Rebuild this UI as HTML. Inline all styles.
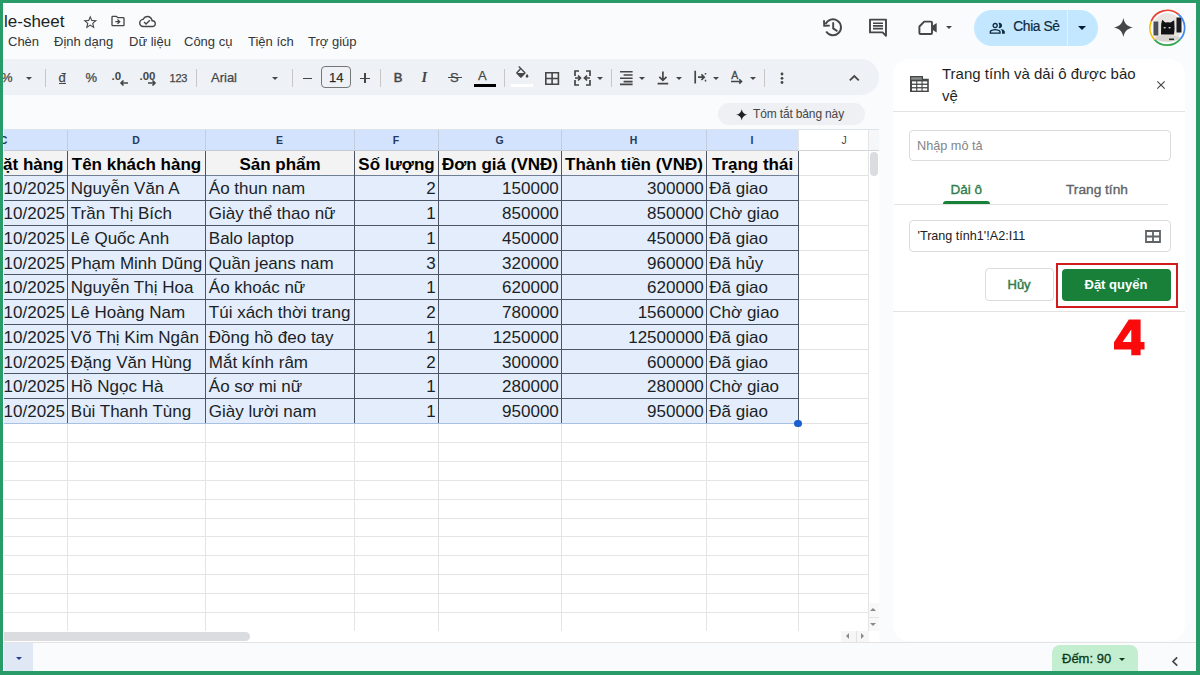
<!DOCTYPE html>
<html><head><meta charset="utf-8">
<style>
*{margin:0;padding:0;box-sizing:border-box}
html,body{width:1200px;height:675px;overflow:hidden;background:#f9fbfd;font-family:"Liberation Sans",sans-serif;color:#1f1f1f}
body{position:relative}
.a{position:absolute;white-space:nowrap}
svg.a{display:block}
</style></head><body>
<div class="a" style="left:4px;top:11.72px;font-size:17px;line-height:1.15;color:#1f1f1f;font-weight:normal;">le-sheet</div>
<svg class="a" style="left:81.6px;top:13.6px;" width="16.5" height="16.5" viewBox="0 0 24 24" fill="#444746"><path d="M22 9.24l-7.19-.62L12 2 9.19 8.63 2 9.24l5.46 4.73L5.82 21 12 17.27 18.18 21l-1.63-7.03L22 9.24zM12 15.4l-3.76 2.27 1-4.28-3.32-2.88 4.38-.38L12 6.1l1.71 4.04 4.38.38-3.32 2.88 1 4.28L12 15.4z"/></svg>
<svg class="a" style="left:110px;top:13px;" width="16" height="16" viewBox="0 0 24 24" fill="#444746"><path d="M20 6h-8l-2-2H4c-1.1 0-1.99.9-1.99 2L2 18c0 1.1.9 2 2 2h16c1.1 0 2-.9 2-2V8c0-1.1-.9-2-2-2zm0 12H4V6h5.17l2 2H20v10zm-7.84-6H8v2h4.16l-1.59 1.59L11.99 17 16 13.01 11.99 9l-1.41 1.41L12.16 12z"/></svg>
<svg class="a" style="left:139px;top:13px;" width="17" height="17" viewBox="0 0 24 24" fill="#444746"><path d="M19.35 10.04C18.67 6.59 15.64 4 12 4 9.11 4 6.6 5.64 5.35 8.04 2.34 8.36 0 10.91 0 14c0 3.31 2.69 6 6 6h13c2.76 0 5-2.24 5-5 0-2.64-2.05-4.78-4.65-4.96zM19 18H6c-2.21 0-4-1.79-4-4 0-2.05 1.53-3.76 3.56-3.97l1.07-.11.5-.95C8.08 7.14 9.94 6 12 6c2.62 0 4.88 1.86 5.39 4.43l.3 1.5 1.53.11c1.56.1 2.78 1.41 2.78 2.96 0 1.65-1.35 3-3 3zm-9-3.82l-2.09-2.09L6.5 13.5 10 17l6.01-6.01-1.41-1.41z"/></svg>
<div class="a" style="left:8px;top:34.73px;font-size:13px;line-height:1.15;color:#363636;font-weight:normal;">Chèn</div>
<div class="a" style="left:54px;top:34.73px;font-size:13px;line-height:1.15;color:#363636;font-weight:normal;">Định dạng</div>
<div class="a" style="left:129px;top:34.73px;font-size:13px;line-height:1.15;color:#363636;font-weight:normal;">Dữ liệu</div>
<div class="a" style="left:184px;top:34.73px;font-size:13px;line-height:1.15;color:#363636;font-weight:normal;">Công cụ</div>
<div class="a" style="left:248px;top:34.73px;font-size:13px;line-height:1.15;color:#363636;font-weight:normal;">Tiện ích</div>
<div class="a" style="left:308px;top:34.73px;font-size:13px;line-height:1.15;color:#363636;font-weight:normal;">Trợ giúp</div>
<svg class="a" style="left:815px;top:12px" width="35" height="30" viewBox="815 12 35 30"><path d="M825.6 24.2 A8 8 0 1 1 826.2 31.5" fill="none" stroke="#444746" stroke-width="1.9"/><path d="M824 20.2 L824.2 25.8 L829.8 25.6" fill="none" stroke="#444746" stroke-width="1.9"/><path d="M833.2 22.2 V28.4 L837.4 31.2" fill="none" stroke="#444746" stroke-width="1.9"/></svg>
<svg class="a" style="left:860px;top:12px" width="35" height="30" viewBox="860 12 35 30"><path d="M870 19.6 H886 V35.8 L882.6 32.4 H870 Z" fill="none" stroke="#444746" stroke-width="1.9" stroke-linejoin="round"/><path d="M873 23.2 H883 M873 25.9 H883 M873 28.6 H883" stroke="#444746" stroke-width="1.6"/></svg>
<svg class="a" style="left:910px;top:14px" width="35" height="28" viewBox="910 14 35 28"><path d="M924.2 21.6 H931 Q932 21.6 932 22.6 V33 Q932 34 931 34 H920.4 Q919.4 34 919.4 33 V26.5 Z" fill="none" stroke="#444746" stroke-width="1.9" stroke-linejoin="round"/><path d="M932 26 L936.7 23 V32.5 L932 29.5 Z" fill="#444746"/></svg>
<div class="a" style="left:945.9000000000001px;top:25.650000000000002px;width:0;height:0;border-left:3.3px solid transparent;border-right:3.3px solid transparent;border-top:3.3px solid #444746"></div>
<div class="a" style="left:974px;top:10px;width:124px;height:36px;border-radius:18px;background:#c2e7ff"></div>
<div class="a" style="left:1066.5px;top:10px;width:1px;height:36px;background:#e3f2fb;"></div>
<svg class="a" style="left:989.3px;top:19.8px;" width="16.5" height="16.5" viewBox="0 0 24 24" fill="#0f2a3f"><path d="M16.67 13.13C18.04 14.06 19 15.32 19 17v3h4v-3c0-2.18-3.57-3.47-6.33-3.87zM15 12c2.21 0 4-1.79 4-4s-1.79-4-4-4c-.47 0-.91.1-1.33.24C14.5 5.27 15 6.58 15 8s-.5 2.73-1.33 3.76c.42.14.86.24 1.33.24zm-6 0c2.21 0 4-1.79 4-4s-1.79-4-4-4-4 1.79-4 4 1.79 4 4 4zm0-6c1.1 0 2 .9 2 2s-.9 2-2 2-2-.9-2-2 .9-2 2-2zm0 7c-2.67 0-8 1.34-8 4v3h16v-3c0-2.66-5.33-4-8-4zm6 5H3v-.99C3.2 16.29 6.3 15 9 15s5.8 1.29 6 2v1z"/></svg>
<div class="a" style="left:1013.3px;top:18.91px;font-size:13.8px;line-height:1.15;color:#0f2a3f;font-weight:normal;-webkit-text-stroke:0.2px #0f2a3f;letter-spacing:-0.4px">Chia Sẻ</div>
<div class="a" style="left:1077.5px;top:25.75px;width:0;height:0;border-left:4.5px solid transparent;border-right:4.5px solid transparent;border-top:4.5px solid #001d35"></div>
<svg class="a" style="left:1112.2px;top:16.4px;" width="22.8" height="22.8" viewBox="0 0 24 24" fill="#444746"><path d="M12 2C13.2 8 16 10.8 22 12 16 13.2 13.2 16 12 22 10.8 16 8 13.2 2 12 8 10.8 10.8 8 12 2z"/></svg>
<svg class="a" style="left:1145px;top:5px" width="45" height="45" viewBox="1145 5 45 45">
<circle cx="1167.3" cy="27.6" r="14.3" fill="#e9e6e2"/>
<rect x="1153.5" y="21.5" width="4.8" height="14" fill="#4a4f58"/>
<rect x="1176.5" y="17.5" width="5" height="15" fill="#1d1d1f"/>
<path d="M1161 34.5 L1161.2 24 L1162.2 19.8 L1165.2 22.6 Q1167.8 22 1170.5 22.6 L1174.2 20.2 L1174.4 25 Q1175 29 1174 34.5 Z" fill="#121214"/>
<ellipse cx="1164.7" cy="27.8" rx="1.2" ry="0.8" fill="#d9dccf"/><ellipse cx="1169.6" cy="27.8" rx="1.2" ry="0.8" fill="#d9dccf"/>
<path d="M1155 37 Q1167 33 1180 37 L1178 40 Q1167 43 1156 40 Z" fill="#d8d4d0"/>
<rect x="1169" y="38.5" width="5" height="1.6" fill="#2a2a2a"/>
<path d="M1151.2 21.3 A17.3 17.3 0 0 1 1178.6 14.5" fill="none" stroke="#ea4335" stroke-width="1.7"/>
<path d="M1178.6 14.5 A17.3 17.3 0 0 1 1180.3 39.1" fill="none" stroke="#4285f4" stroke-width="1.7"/>
<path d="M1180.3 39.1 A17.3 17.3 0 0 1 1154.4 39.6" fill="none" stroke="#34a853" stroke-width="1.7"/>
<path d="M1154.4 39.6 A17.3 17.3 0 0 1 1151.2 21.3" fill="none" stroke="#fbbc04" stroke-width="1.7"/>
</svg>
<div class="a" style="left:0;top:59px;width:879px;height:36px;background:#eef1f6;border-radius:0 18px 18px 0"></div>
<div class="a" style="left:1px;top:71.23px;font-size:13px;line-height:1.15;color:#444746;font-weight:normal;-webkit-text-stroke:0.25px #444746;">%</div>
<div class="a" style="left:25.5px;top:76.75px;width:0;height:0;border-left:3.5px solid transparent;border-right:3.5px solid transparent;border-top:3.5px solid #444746"></div>
<div class="a" style="left:45px;top:69px;width:1px;height:17.5px;background:#c7c7c7;"></div>
<div class="a" style="left:58.5px;top:70.73px;font-size:13px;line-height:1.15;color:#444746;font-weight:normal;-webkit-text-stroke:0.25px #444746;">đ</div>
<div class="a" style="left:58.5px;top:83px;width:7px;height:1.3px;background:#444746;"></div>
<div class="a" style="left:85.5px;top:70.73px;font-size:13px;line-height:1.15;color:#444746;font-weight:normal;-webkit-text-stroke:0.25px #444746;">%</div>
<div class="a" style="left:111.5px;top:69.89px;font-size:11.5px;line-height:1.15;color:#444746;font-weight:bold;">.0</div>
<svg class="a" style="left:119px;top:79.5px;" width="10" height="6" viewBox="0 0 10 6" fill="#444746"><path d="M9 3H2M4.5 0.5L2 3l2.5 2.5" stroke="#444746" stroke-width="1.6" fill="none"/></svg>
<div class="a" style="left:139.5px;top:69.89px;font-size:11.5px;line-height:1.15;color:#444746;font-weight:bold;">.00</div>
<svg class="a" style="left:147px;top:79.5px;" width="10" height="6" viewBox="0 0 10 6" fill="#444746"><path d="M1 3h7M5.5 0.5L8 3 5.5 5.5" stroke="#444746" stroke-width="1.6" fill="none"/></svg>
<div class="a" style="left:169.5px;top:71.55px;font-size:11px;line-height:1.15;color:#444746;font-weight:normal;-webkit-text-stroke:0.25px #444746;letter-spacing:-0.2px">123</div>
<div class="a" style="left:196px;top:69px;width:1px;height:17.5px;background:#c7c7c7;"></div>
<div class="a" style="left:211px;top:70.73px;font-size:13px;line-height:1.15;color:#444746;font-weight:normal;-webkit-text-stroke:0.25px #444746;">Arial</div>
<div class="a" style="left:271.5px;top:76.75px;width:0;height:0;border-left:3.5px solid transparent;border-right:3.5px solid transparent;border-top:3.5px solid #444746"></div>
<div class="a" style="left:292px;top:69px;width:1px;height:17.5px;background:#c7c7c7;"></div>
<div class="a" style="left:302.5px;top:77.5px;width:9.5px;height:1.6px;background:#444746;"></div>
<div class="a" style="left:321px;top:66px;width:30px;height:22px;border:1px solid #747775;border-radius:4px"></div>
<div class="a" style="left:329px;top:70.73px;font-size:13px;line-height:1.15;color:#1f1f1f;font-weight:normal;-webkit-text-stroke:0.25px #444746;">14</div>
<div class="a" style="left:360px;top:77.5px;width:9.5px;height:1.6px;background:#444746;"></div>
<div class="a" style="left:364px;top:73px;width:1.6px;height:10px;background:#444746;"></div>
<div class="a" style="left:380px;top:69px;width:1px;height:17.5px;background:#c7c7c7;"></div>
<div class="a" style="left:393.8px;top:70.53px;font-size:13px;line-height:1.15;color:#444746;font-weight:normal;-webkit-text-stroke:0.55px #444746">B</div>
<div class="a" style="left:421.5px;top:69.18px;font-size:14.5px;line-height:1.15;color:#444746;font-weight:bold;font-family:'Liberation Serif',serif"><i>I</i></div>
<div class="a" style="left:450px;top:70.53px;font-size:13px;line-height:1.15;color:#444746;font-weight:normal;-webkit-text-stroke:0.25px #444746;">S</div>
<div class="a" style="left:448px;top:76.6px;width:14px;height:1.5px;background:#444746;"></div>
<div class="a" style="left:478px;top:68.73px;font-size:13px;line-height:1.15;color:#444746;font-weight:normal;-webkit-text-stroke:0.25px #444746;">A</div>
<div class="a" style="left:474px;top:84px;width:22px;height:3px;background:#000;"></div>
<div class="a" style="left:504px;top:69px;width:1px;height:17.5px;background:#c7c7c7;"></div>
<svg class="a" style="left:513.5px;top:66px;" width="16.5" height="16.5" viewBox="0 0 24 24" fill="#444746"><path d="M16.56 8.94L7.62 0 6.21 1.41l2.38 2.38-5.15 5.15c-.59.59-.59 1.54 0 2.12l5.5 5.5c.29.29.68.44 1.06.44s.77-.15 1.06-.44l5.5-5.5c.59-.58.59-1.53 0-2.12zM5.21 10L10 5.21 14.79 10H5.21zM19 11.5s-2 2.17-2 3.5c0 1.1.9 2 2 2s2-.9 2-2c0-1.33-2-3.5-2-3.5z"/></svg>
<div class="a" style="left:511px;top:84px;width:22px;height:3px;background:#ffffff;"></div>
<svg class="a" style="left:540px;top:68px" width="25" height="22" viewBox="540 68 25 22"><path d="M545.8 72.8 H558.4 V84.2 H545.8 Z M552.1 72.8 V84.2 M545.8 78.5 H558.4" stroke="#444746" stroke-width="1.6" fill="none"/></svg>
<svg class="a" style="left:574px;top:70px;" width="17" height="16" viewBox="0 0 17 16" fill="#444746"><path d="M1 6V1h4M12 1h4v5M1 10v5h4M12 15h4v-5M1 8h5M4 5.5L6.5 8 4 10.5M16 8h-5M13 5.5L10.5 8 13 10.5" stroke="#444746" stroke-width="1.7" fill="none"/></svg>
<div class="a" style="left:596.5px;top:76.75px;width:0;height:0;border-left:3.5px solid transparent;border-right:3.5px solid transparent;border-top:3.5px solid #444746"></div>
<div class="a" style="left:611px;top:69px;width:1px;height:17.5px;background:#c7c7c7;"></div>
<svg class="a" style="left:615px;top:66px" width="25" height="24" viewBox="615 66 25 24"><path d="M620 71.7 H632.6 M623.6 75 H632.6 M620 78.3 H632.6 M623.6 81.6 H632.6 M620 84.4 H632.6" stroke="#444746" stroke-width="1.6" fill="none"/></svg>
<div class="a" style="left:639.0px;top:76.75px;width:0;height:0;border-left:3.5px solid transparent;border-right:3.5px solid transparent;border-top:3.5px solid #444746"></div>
<svg class="a" style="left:652px;top:66px" width="23" height="24" viewBox="652 66 23 24"><path d="M662.9 71.5 V80.2 M659.3 76.8 L662.9 80.4 L666.5 76.8 M657.6 83.6 H668.2" stroke="#444746" stroke-width="1.7" fill="none"/></svg>
<div class="a" style="left:676.0px;top:76.75px;width:0;height:0;border-left:3.5px solid transparent;border-right:3.5px solid transparent;border-top:3.5px solid #444746"></div>
<svg class="a" style="left:690px;top:66px" width="22" height="24" viewBox="690 66 22 24"><path d="M695.2 70.8 V83.5 M698 77.2 H704 M701.4 74.4 L704.2 77.2 L701.4 80" stroke="#444746" stroke-width="1.7" fill="none"/><path d="M705.5 73 V74.6 M705.5 79.8 V81.4" stroke="#444746" stroke-width="1.5"/></svg>
<div class="a" style="left:712.5px;top:76.75px;width:0;height:0;border-left:3.5px solid transparent;border-right:3.5px solid transparent;border-top:3.5px solid #444746"></div>
<div class="a" style="left:731.2px;top:69.10px;font-size:10.5px;line-height:1.15;color:#444746;font-weight:normal;-webkit-text-stroke:0.3px #444746">A</div>
<svg class="a" style="left:728px;top:76px" width="18" height="12" viewBox="728 76 18 12"><path d="M731 81.4 H741.5 M739.3 79.2 L741.6 81.4 L739.3 83.6" stroke="#444746" stroke-width="1.5" fill="none"/></svg>
<div class="a" style="left:749.5px;top:76.75px;width:0;height:0;border-left:3.5px solid transparent;border-right:3.5px solid transparent;border-top:3.5px solid #444746"></div>
<div class="a" style="left:764px;top:69px;width:1px;height:17.5px;background:#c7c7c7;"></div>
<svg class="a" style="left:775px;top:68px" width="15" height="22" viewBox="775 68 15 22"><circle cx="782" cy="74" r="1.4" fill="#444746"/><circle cx="782" cy="78.3" r="1.4" fill="#444746"/><circle cx="782" cy="82.5" r="1.4" fill="#444746"/></svg>
<svg class="a" style="left:845px;top:70px" width="20" height="18" viewBox="845 70 20 18"><path d="M849.8 80.4 L854.3 76 L858.8 80.4" fill="none" stroke="#444746" stroke-width="1.8"/></svg>
<div class="a" style="left:718px;top:103px;width:147px;height:22px;border-radius:11px;background:#eef0f4"></div>
<svg class="a" style="left:734.6px;top:107.6px;" width="13.5" height="13.5" viewBox="0 0 24 24" fill="#1f1f1f"><path d="M12 2C12.6 7.4 16.6 11.4 22 12 16.6 12.6 12.6 16.6 12 22 11.4 16.6 7.4 12.6 2 12 7.4 11.4 11.4 7.4 12 2z"/></svg>
<div class="a" style="left:753px;top:107.64px;font-size:12px;line-height:1.15;color:#444746;font-weight:normal;letter-spacing:-0.15px">Tóm tắt bảng này</div>
<div class="a" style="left:4px;top:129px;width:875px;height:513px;background:#ffffff;"></div>
<div class="a" style="left:4px;top:129px;width:794px;height:22px;background:#d3e3fd;"></div>
<div class="a" style="left:-6.5px;top:133.5px;width:20px;text-align:center;font-size:10.5px;line-height:12px;font-weight:bold;color:#263a5e">C</div>
<div class="a" style="left:126.0px;top:133.5px;width:20px;text-align:center;font-size:10.5px;line-height:12px;font-weight:bold;color:#263a5e">D</div>
<div class="a" style="left:269.5px;top:133.5px;width:20px;text-align:center;font-size:10.5px;line-height:12px;font-weight:bold;color:#263a5e">E</div>
<div class="a" style="left:386.0px;top:133.5px;width:20px;text-align:center;font-size:10.5px;line-height:12px;font-weight:bold;color:#263a5e">F</div>
<div class="a" style="left:489.5px;top:133.5px;width:20px;text-align:center;font-size:10.5px;line-height:12px;font-weight:bold;color:#263a5e">G</div>
<div class="a" style="left:623.5px;top:133.5px;width:20px;text-align:center;font-size:10.5px;line-height:12px;font-weight:bold;color:#263a5e">H</div>
<div class="a" style="left:742.0px;top:133.5px;width:20px;text-align:center;font-size:10.5px;line-height:12px;font-weight:bold;color:#263a5e">I</div>
<div class="a" style="left:834.0px;top:133.5px;width:20px;text-align:center;font-size:10.5px;line-height:12px;font-weight:normal;color:#444746">J</div>
<div class="a" style="left:4px;top:151px;width:794px;height:24px;background:#f3f3f3;"></div>
<div class="a" style="left:4px;top:175px;width:794px;height:248px;background:#e4edfb;"></div>
<div class="a" style="left:4px;top:442px;width:864px;height:1px;background:#e5e5e5;"></div>
<div class="a" style="left:4px;top:461px;width:864px;height:1px;background:#e5e5e5;"></div>
<div class="a" style="left:4px;top:480px;width:864px;height:1px;background:#e5e5e5;"></div>
<div class="a" style="left:4px;top:499px;width:864px;height:1px;background:#e5e5e5;"></div>
<div class="a" style="left:4px;top:518px;width:864px;height:1px;background:#e5e5e5;"></div>
<div class="a" style="left:4px;top:536px;width:864px;height:1px;background:#e5e5e5;"></div>
<div class="a" style="left:4px;top:555px;width:864px;height:1px;background:#e5e5e5;"></div>
<div class="a" style="left:4px;top:574px;width:864px;height:1px;background:#e5e5e5;"></div>
<div class="a" style="left:4px;top:593px;width:864px;height:1px;background:#e5e5e5;"></div>
<div class="a" style="left:4px;top:612px;width:864px;height:1px;background:#e5e5e5;"></div>
<div class="a" style="left:67px;top:423px;width:1px;height:208px;background:#e5e5e5;"></div>
<div class="a" style="left:205px;top:423px;width:1px;height:208px;background:#e5e5e5;"></div>
<div class="a" style="left:354px;top:423px;width:1px;height:208px;background:#e5e5e5;"></div>
<div class="a" style="left:438px;top:423px;width:1px;height:208px;background:#e5e5e5;"></div>
<div class="a" style="left:561px;top:423px;width:1px;height:208px;background:#e5e5e5;"></div>
<div class="a" style="left:706px;top:423px;width:1px;height:208px;background:#e5e5e5;"></div>
<div class="a" style="left:798px;top:423px;width:1px;height:208px;background:#e5e5e5;"></div>
<div class="a" style="left:868px;top:423px;width:1px;height:208px;background:#e5e5e5;"></div>
<div class="a" style="left:799px;top:175px;width:69px;height:1px;background:#e2e2e2;"></div>
<div class="a" style="left:799px;top:200px;width:69px;height:1px;background:#e2e2e2;"></div>
<div class="a" style="left:799px;top:225px;width:69px;height:1px;background:#e2e2e2;"></div>
<div class="a" style="left:799px;top:250px;width:69px;height:1px;background:#e2e2e2;"></div>
<div class="a" style="left:799px;top:274px;width:69px;height:1px;background:#e2e2e2;"></div>
<div class="a" style="left:799px;top:299px;width:69px;height:1px;background:#e2e2e2;"></div>
<div class="a" style="left:799px;top:324px;width:69px;height:1px;background:#e2e2e2;"></div>
<div class="a" style="left:799px;top:349px;width:69px;height:1px;background:#e2e2e2;"></div>
<div class="a" style="left:799px;top:373px;width:69px;height:1px;background:#e2e2e2;"></div>
<div class="a" style="left:799px;top:398px;width:69px;height:1px;background:#e2e2e2;"></div>
<div class="a" style="left:799px;top:423px;width:69px;height:1px;background:#e2e2e2;"></div>
<div class="a" style="left:67px;top:129px;width:1px;height:22px;background:#c2cde0;"></div>
<div class="a" style="left:205px;top:129px;width:1px;height:22px;background:#c2cde0;"></div>
<div class="a" style="left:354px;top:129px;width:1px;height:22px;background:#c2cde0;"></div>
<div class="a" style="left:438px;top:129px;width:1px;height:22px;background:#c2cde0;"></div>
<div class="a" style="left:561px;top:129px;width:1px;height:22px;background:#c2cde0;"></div>
<div class="a" style="left:706px;top:129px;width:1px;height:22px;background:#c2cde0;"></div>
<div class="a" style="left:798px;top:129px;width:1px;height:22px;background:#e6e6e6;"></div>
<div class="a" style="left:868px;top:129px;width:1px;height:22px;background:#e6e6e6;"></div>
<div class="a" style="left:869px;top:129px;width:10px;height:22px;background:#f6f7f8;"></div>
<div class="a" style="left:799px;top:150px;width:80px;height:1px;background:#d4d4d4;"></div>
<div class="a" style="left:4px;top:128.5px;width:875px;height:0.8px;background:#dde3ea;"></div>
<div class="a" style="left:4px;top:150px;width:794px;height:1px;background:#c5cad3;"></div>
<div class="a" style="left:4px;top:175px;width:795px;height:1px;background:#6f7f96;"></div>
<div class="a" style="left:4px;top:200px;width:795px;height:1px;background:#4a5566;"></div>
<div class="a" style="left:4px;top:225px;width:795px;height:1px;background:#4a5566;"></div>
<div class="a" style="left:4px;top:250px;width:795px;height:1px;background:#4a5566;"></div>
<div class="a" style="left:4px;top:274px;width:795px;height:1px;background:#4a5566;"></div>
<div class="a" style="left:4px;top:299px;width:795px;height:1px;background:#4a5566;"></div>
<div class="a" style="left:4px;top:324px;width:795px;height:1px;background:#4a5566;"></div>
<div class="a" style="left:4px;top:349px;width:795px;height:1px;background:#4a5566;"></div>
<div class="a" style="left:4px;top:373px;width:795px;height:1px;background:#4a5566;"></div>
<div class="a" style="left:4px;top:398px;width:795px;height:1px;background:#4a5566;"></div>
<div class="a" style="left:67px;top:151px;width:1px;height:272px;background:#4a5464;"></div>
<div class="a" style="left:205px;top:151px;width:1px;height:272px;background:#4a5464;"></div>
<div class="a" style="left:354px;top:151px;width:1px;height:272px;background:#4a5464;"></div>
<div class="a" style="left:438px;top:151px;width:1px;height:272px;background:#4a5464;"></div>
<div class="a" style="left:561px;top:151px;width:1px;height:272px;background:#4a5464;"></div>
<div class="a" style="left:706px;top:151px;width:1px;height:272px;background:#4a5464;"></div>
<div class="a" style="left:798px;top:151px;width:1px;height:272px;background:#4a5464;"></div>
<div class="a" style="left:4px;top:423px;width:795px;height:1px;background:#a8c0e2;"></div>
<div class="a" style="left:794px;top:419.6px;width:7.6px;height:7.6px;border-radius:50%;background:#1a5fd0"></div>
<div class="a" style="right:1136.5px;top:154.56px;font-size:17px;line-height:1.15;color:#000;font-weight:bold;text-align:right;">ặt hàng</div>
<div class="a" style="left:67px;top:154.56px;width:139px;text-align:center;font-size:17px;line-height:1.15;font-weight:bold;color:#000">Tên khách hàng</div>
<div class="a" style="left:205px;top:154.56px;width:150px;text-align:center;font-size:17px;line-height:1.15;font-weight:bold;color:#000">Sản phẩm</div>
<div class="a" style="left:354px;top:154.56px;width:85px;text-align:center;font-size:17px;line-height:1.15;font-weight:bold;color:#000">Số lượng</div>
<div class="a" style="left:438px;top:154.56px;width:124px;text-align:center;font-size:17px;line-height:1.15;font-weight:bold;color:#000">Đơn giá (VNĐ)</div>
<div class="a" style="left:561px;top:154.56px;width:146px;text-align:center;font-size:17px;line-height:1.15;font-weight:bold;color:#000">Thành tiền (VNĐ)</div>
<div class="a" style="left:706px;top:154.56px;width:93px;text-align:center;font-size:17px;line-height:1.15;font-weight:bold;color:#000">Trạng thái</div>
<div class="a" style="left:4px;top:150px;width:864px;height:280px;overflow:hidden">
<div class="a" style="right:803px;top:29.31px;font-size:17px;line-height:1.15;color:#1b1f27">10/10/2025</div>
<div class="a" style="left:66.8px;top:29.31px;font-size:17px;line-height:1.15;color:#1b1f27">Nguyễn Văn A</div>
<div class="a" style="left:204.8px;top:29.31px;font-size:17px;line-height:1.15;color:#1b1f27">Áo thun nam</div>
<div class="a" style="right:432.4px;top:29.31px;font-size:17px;line-height:1.15;color:#1b1f27">2</div>
<div class="a" style="right:309.20000000000005px;top:29.31px;font-size:17px;line-height:1.15;color:#1b1f27">150000</div>
<div class="a" style="right:164.20000000000005px;top:29.31px;font-size:17px;line-height:1.15;color:#1b1f27">300000</div>
<div class="a" style="left:705.3px;top:29.31px;font-size:17px;line-height:1.15;color:#1b1f27">Đã giao</div>
<div class="a" style="right:803px;top:54.06px;font-size:17px;line-height:1.15;color:#1b1f27">11/10/2025</div>
<div class="a" style="left:66.8px;top:54.06px;font-size:17px;line-height:1.15;color:#1b1f27">Trần Thị Bích</div>
<div class="a" style="left:204.8px;top:54.06px;font-size:17px;line-height:1.15;color:#1b1f27">Giày thể thao nữ</div>
<div class="a" style="right:432.4px;top:54.06px;font-size:17px;line-height:1.15;color:#1b1f27">1</div>
<div class="a" style="right:309.20000000000005px;top:54.06px;font-size:17px;line-height:1.15;color:#1b1f27">850000</div>
<div class="a" style="right:164.20000000000005px;top:54.06px;font-size:17px;line-height:1.15;color:#1b1f27">850000</div>
<div class="a" style="left:705.3px;top:54.06px;font-size:17px;line-height:1.15;color:#1b1f27">Chờ giao</div>
<div class="a" style="right:803px;top:78.81px;font-size:17px;line-height:1.15;color:#1b1f27">12/10/2025</div>
<div class="a" style="left:66.8px;top:78.81px;font-size:17px;line-height:1.15;color:#1b1f27">Lê Quốc Anh</div>
<div class="a" style="left:204.8px;top:78.81px;font-size:17px;line-height:1.15;color:#1b1f27">Balo laptop</div>
<div class="a" style="right:432.4px;top:78.81px;font-size:17px;line-height:1.15;color:#1b1f27">1</div>
<div class="a" style="right:309.20000000000005px;top:78.81px;font-size:17px;line-height:1.15;color:#1b1f27">450000</div>
<div class="a" style="right:164.20000000000005px;top:78.81px;font-size:17px;line-height:1.15;color:#1b1f27">450000</div>
<div class="a" style="left:705.3px;top:78.81px;font-size:17px;line-height:1.15;color:#1b1f27">Đã giao</div>
<div class="a" style="right:803px;top:103.56px;font-size:17px;line-height:1.15;color:#1b1f27">13/10/2025</div>
<div class="a" style="left:66.8px;top:103.56px;font-size:17px;line-height:1.15;color:#1b1f27">Phạm Minh Dũng</div>
<div class="a" style="left:204.8px;top:103.56px;font-size:17px;line-height:1.15;color:#1b1f27">Quần jeans nam</div>
<div class="a" style="right:432.4px;top:103.56px;font-size:17px;line-height:1.15;color:#1b1f27">3</div>
<div class="a" style="right:309.20000000000005px;top:103.56px;font-size:17px;line-height:1.15;color:#1b1f27">320000</div>
<div class="a" style="right:164.20000000000005px;top:103.56px;font-size:17px;line-height:1.15;color:#1b1f27">960000</div>
<div class="a" style="left:705.3px;top:103.56px;font-size:17px;line-height:1.15;color:#1b1f27">Đã hủy</div>
<div class="a" style="right:803px;top:128.31px;font-size:17px;line-height:1.15;color:#1b1f27">14/10/2025</div>
<div class="a" style="left:66.8px;top:128.31px;font-size:17px;line-height:1.15;color:#1b1f27">Nguyễn Thị Hoa</div>
<div class="a" style="left:204.8px;top:128.31px;font-size:17px;line-height:1.15;color:#1b1f27">Áo khoác nữ</div>
<div class="a" style="right:432.4px;top:128.31px;font-size:17px;line-height:1.15;color:#1b1f27">1</div>
<div class="a" style="right:309.20000000000005px;top:128.31px;font-size:17px;line-height:1.15;color:#1b1f27">620000</div>
<div class="a" style="right:164.20000000000005px;top:128.31px;font-size:17px;line-height:1.15;color:#1b1f27">620000</div>
<div class="a" style="left:705.3px;top:128.31px;font-size:17px;line-height:1.15;color:#1b1f27">Đã giao</div>
<div class="a" style="right:803px;top:153.06px;font-size:17px;line-height:1.15;color:#1b1f27">15/10/2025</div>
<div class="a" style="left:66.8px;top:153.06px;font-size:17px;line-height:1.15;color:#1b1f27">Lê Hoàng Nam</div>
<div class="a" style="left:204.8px;top:153.06px;font-size:17px;line-height:1.15;color:#1b1f27">Túi xách thời trang</div>
<div class="a" style="right:432.4px;top:153.06px;font-size:17px;line-height:1.15;color:#1b1f27">2</div>
<div class="a" style="right:309.20000000000005px;top:153.06px;font-size:17px;line-height:1.15;color:#1b1f27">780000</div>
<div class="a" style="right:164.20000000000005px;top:153.06px;font-size:17px;line-height:1.15;color:#1b1f27">1560000</div>
<div class="a" style="left:705.3px;top:153.06px;font-size:17px;line-height:1.15;color:#1b1f27">Chờ giao</div>
<div class="a" style="right:803px;top:177.81px;font-size:17px;line-height:1.15;color:#1b1f27">16/10/2025</div>
<div class="a" style="left:66.8px;top:177.81px;font-size:17px;line-height:1.15;color:#1b1f27">Võ Thị Kim Ngân</div>
<div class="a" style="left:204.8px;top:177.81px;font-size:17px;line-height:1.15;color:#1b1f27">Đồng hồ đeo tay</div>
<div class="a" style="right:432.4px;top:177.81px;font-size:17px;line-height:1.15;color:#1b1f27">1</div>
<div class="a" style="right:309.20000000000005px;top:177.81px;font-size:17px;line-height:1.15;color:#1b1f27">1250000</div>
<div class="a" style="right:164.20000000000005px;top:177.81px;font-size:17px;line-height:1.15;color:#1b1f27">12500000</div>
<div class="a" style="left:705.3px;top:177.81px;font-size:17px;line-height:1.15;color:#1b1f27">Đã giao</div>
<div class="a" style="right:803px;top:202.56px;font-size:17px;line-height:1.15;color:#1b1f27">17/10/2025</div>
<div class="a" style="left:66.8px;top:202.56px;font-size:17px;line-height:1.15;color:#1b1f27">Đặng Văn Hùng</div>
<div class="a" style="left:204.8px;top:202.56px;font-size:17px;line-height:1.15;color:#1b1f27">Mắt kính râm</div>
<div class="a" style="right:432.4px;top:202.56px;font-size:17px;line-height:1.15;color:#1b1f27">2</div>
<div class="a" style="right:309.20000000000005px;top:202.56px;font-size:17px;line-height:1.15;color:#1b1f27">300000</div>
<div class="a" style="right:164.20000000000005px;top:202.56px;font-size:17px;line-height:1.15;color:#1b1f27">600000</div>
<div class="a" style="left:705.3px;top:202.56px;font-size:17px;line-height:1.15;color:#1b1f27">Đã giao</div>
<div class="a" style="right:803px;top:227.31px;font-size:17px;line-height:1.15;color:#1b1f27">18/10/2025</div>
<div class="a" style="left:66.8px;top:227.31px;font-size:17px;line-height:1.15;color:#1b1f27">Hồ Ngọc Hà</div>
<div class="a" style="left:204.8px;top:227.31px;font-size:17px;line-height:1.15;color:#1b1f27">Áo sơ mi nữ</div>
<div class="a" style="right:432.4px;top:227.31px;font-size:17px;line-height:1.15;color:#1b1f27">1</div>
<div class="a" style="right:309.20000000000005px;top:227.31px;font-size:17px;line-height:1.15;color:#1b1f27">280000</div>
<div class="a" style="right:164.20000000000005px;top:227.31px;font-size:17px;line-height:1.15;color:#1b1f27">280000</div>
<div class="a" style="left:705.3px;top:227.31px;font-size:17px;line-height:1.15;color:#1b1f27">Chờ giao</div>
<div class="a" style="right:803px;top:252.06px;font-size:17px;line-height:1.15;color:#1b1f27">19/10/2025</div>
<div class="a" style="left:66.8px;top:252.06px;font-size:17px;line-height:1.15;color:#1b1f27">Bùi Thanh Tùng</div>
<div class="a" style="left:204.8px;top:252.06px;font-size:17px;line-height:1.15;color:#1b1f27">Giày lười nam</div>
<div class="a" style="right:432.4px;top:252.06px;font-size:17px;line-height:1.15;color:#1b1f27">1</div>
<div class="a" style="right:309.20000000000005px;top:252.06px;font-size:17px;line-height:1.15;color:#1b1f27">950000</div>
<div class="a" style="right:164.20000000000005px;top:252.06px;font-size:17px;line-height:1.15;color:#1b1f27">950000</div>
<div class="a" style="left:705.3px;top:252.06px;font-size:17px;line-height:1.15;color:#1b1f27">Đã giao</div>
</div>
<div class="a" style="left:868px;top:129px;width:1px;height:502px;background:#e4e4e4;"></div>
<div class="a" style="left:870px;top:152px;width:8px;height:24px;border-radius:4px;background:#dadce0"></div>
<div class="a" style="left:868.5px;top:602.5px;width:10.5px;height:28.5px;background:#f8f8f8;"></div>
<div class="a" style="left:868.5px;top:616.5px;width:10.5px;height:0.8px;background:#e4e4e4;"></div>
<div class="a" style="left:870.2px;top:608px;width:0;height:0;border-left:3.5px solid transparent;border-right:3.5px solid transparent;border-bottom:3.5px solid #8a8a8a"></div>
<div class="a" style="left:870.2px;top:623.25px;width:0;height:0;border-left:3.5px solid transparent;border-right:3.5px solid transparent;border-top:3.5px solid #8a8a8a"></div>
<div class="a" style="left:4px;top:631.5px;width:246px;height:9.5px;border-radius:0 5px 5px 0;background:#dadce0"></div>
<div class="a" style="left:841px;top:631px;width:28px;height:10.5px;background:#f6f6f6;"></div>
<div class="a" style="left:856px;top:631px;width:0.8px;height:10.5px;background:#e2e2e2;"></div>
<div class="a" style="left:846px;top:633px;width:0;height:0;border-top:3.5px solid transparent;border-bottom:3.5px solid transparent;border-right:3.5px solid #8a8a8a"></div>
<div class="a" style="left:861px;top:633px;width:0;height:0;border-top:3.5px solid transparent;border-bottom:3.5px solid transparent;border-left:3.5px solid #8a8a8a"></div>
<div class="a" style="left:0px;top:641.5px;width:1200px;height:1px;background:#e3e3e3;"></div>
<div class="a" style="left:4px;top:642.5px;width:29px;height:30px;background:#e1e8f5;"></div>
<div class="a" style="left:15.5px;top:657.25px;width:0;height:0;border-left:3.5px solid transparent;border-right:3.5px solid transparent;border-top:3.5px solid #23408e"></div>
<div class="a" style="left:1052px;top:645px;width:86px;height:34px;border-radius:8px;background:#c4eed0"></div>
<div class="a" style="left:1062px;top:651.74px;font-size:13px;line-height:1.15;color:#0a3a1c;font-weight:normal;-webkit-text-stroke:0.3px #0a3a1c">Đếm: 90</div>
<div class="a" style="left:1119.25px;top:657.625px;width:0;height:0;border-left:3.75px solid transparent;border-right:3.75px solid transparent;border-top:3.75px solid #0a3a1c"></div>
<svg class="a" style="left:1165px;top:650px" width="20" height="20" viewBox="1165 650 20 20"><path d="M1177.2 657.3 L1173 661.5 L1177.2 665.7" fill="none" stroke="#444746" stroke-width="1.7"/></svg>
<div class="a" style="left:893px;top:59px;width:292px;height:582px;background:#fff;border-radius:16px"></div>
<svg class="a" style="left:904px;top:70px" width="30" height="28" viewBox="904 70 30 28"><path d="M910 76 H923 V78.8 H928.8 V92 H910 Z" fill="#444746"/><rect x="911.2" y="77.3" width="10.6" height="2.4" fill="#8a8f8c"/><g fill="#fff"><rect x="912" y="81.4" width="4.2" height="2.2"/><rect x="917.3" y="81.4" width="4.2" height="2.2"/><rect x="922.6" y="81.4" width="4.6" height="2.2"/><rect x="912" y="84.9" width="4.2" height="2.2"/><rect x="917.3" y="84.9" width="4.2" height="2.2"/><rect x="922.6" y="84.9" width="4.6" height="2.2"/><rect x="912" y="88.4" width="4.2" height="2.2"/><rect x="917.3" y="88.4" width="4.2" height="2.2"/><rect x="922.6" y="88.4" width="4.6" height="2.2"/></g></svg>
<div class="a" style="left:942px;top:65.42px;font-size:15px;line-height:1.15;color:#1f1f1f;font-weight:normal;">Trang tính và dải ô được bảo</div>
<div class="a" style="left:942px;top:87.42px;font-size:15px;line-height:1.15;color:#1f1f1f;font-weight:normal;">vệ</div>
<svg class="a" style="left:1153.5px;top:78px;" width="14" height="14" viewBox="0 0 24 24" fill="#444746"><path d="M19 6.41L17.59 5 12 10.59 6.41 5 5 6.41 10.59 12 5 17.59 6.41 19 12 13.41 17.59 19 19 17.59 13.41 12z"/></svg>
<div class="a" style="left:893px;top:110.5px;width:292px;height:1px;background:#e3e3e3;"></div>
<div class="a" style="left:909px;top:129.5px;width:261.5px;height:31.5px;border:1px solid #dadce0;border-radius:4px"></div>
<div class="a" style="left:917px;top:138.51px;font-size:12.7px;line-height:1.15;color:#80868b;font-weight:normal;">Nhập mô tả</div>
<div class="a" style="left:950.5px;top:181.78px;font-size:13.5px;line-height:1.15;color:#2e7d4a;font-weight:normal;-webkit-text-stroke:0.35px #2e7d4a">Dải ô</div>
<div class="a" style="left:1066px;top:181.60px;font-size:13.7px;line-height:1.15;color:#5f6368;font-weight:normal;-webkit-text-stroke:0.35px #5f6368">Trang tính</div>
<div class="a" style="left:894px;top:204px;width:273.5px;height:1px;background:#e3e3e3;"></div>
<div class="a" style="left:942.5px;top:201px;width:47px;height:3px;border-radius:3px 3px 0 0;background:#188038"></div>
<div class="a" style="left:909px;top:219.5px;width:261.5px;height:32.5px;border:1px solid #dadce0;border-radius:4px"></div>
<div class="a" style="left:917.5px;top:229.10px;font-size:12.6px;line-height:1.15;color:#202124;font-weight:normal;">'Trang tính1'!A2:I11</div>
<svg class="a" style="left:1145px;top:229.5px;" width="16" height="13" viewBox="0 0 16 13" fill="#444746"><path d="M1 1h14v11H1zM8 1v11M1 6.5h14" stroke="#5f6368" stroke-width="1.8" fill="none"/></svg>
<div class="a" style="left:984.5px;top:268px;width:69px;height:32.5px;border:1px solid #dadce0;border-radius:4px;background:#fff"></div>
<div class="a" style="left:1007.5px;top:277.74px;font-size:13px;line-height:1.15;color:#2e7d4a;font-weight:normal;-webkit-text-stroke:0.45px #2e7d4a">Hủy</div>
<div class="a" style="left:1062px;top:268.5px;width:109px;height:32px;border-radius:4px;background:#188038"></div>
<div class="a" style="left:1084.5px;top:277.74px;font-size:13px;line-height:1.15;color:#ffffff;font-weight:bold;">Đặt quyển</div>
<div class="a" style="left:1056px;top:263px;width:122px;height:44.5px;border:2px solid #d01c1c"></div>
<div class="a" style="left:893px;top:311px;width:292px;height:1px;background:#e3e3e3;"></div>
<svg class="a" style="left:1105px;top:312px" width="45" height="48" viewBox="1105 312 45 48"><path fill-rule="evenodd" fill="#fa0a0a" d="M1128.8 319.4 L1140.6 319.4 L1140.6 342 L1144.5 342 L1144.5 349.4 L1140.6 349.4 L1140.6 355.2 L1131.3 355.2 L1131.3 349.4 L1114 349.4 L1114 342.2 Z M1122.6 342 L1131.3 342 L1131.3 329.6 Z"/></svg>
<div class="a" style="left:0;top:0;width:1200px;height:675px;border:4px solid #289b69;border-width:3.8px 4.3px 4.3px 3.9px;z-index:50"></div>
</body></html>
